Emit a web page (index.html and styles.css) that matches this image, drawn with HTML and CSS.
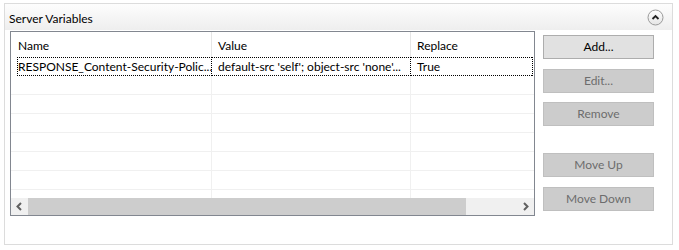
FILE: index.html
```html
<!DOCTYPE html>
<html>
<head>
<meta charset="utf-8">
<link rel="stylesheet" href="styles.css">
</head>
<body>
<div class="panel">
  <div class="panel-head">
    <span class="panel-title">Server Variables</span>
    <svg class="collapse" width="17" height="17" viewBox="0 0 17 17">
      <defs>
        <linearGradient id="cg" x1="0" y1="0" x2="0" y2="1">
          <stop offset="0" stop-color="#ffffff"/>
          <stop offset="1" stop-color="#e4e4e4"/>
        </linearGradient>
      </defs>
      <circle cx="8.5" cy="8.5" r="7.5" fill="url(#cg)" stroke="#9a9a9a" stroke-width="1"/>
      <path d="M5.5 10 L8.5 7 L11.5 10" fill="none" stroke="#222" stroke-width="1.8"/>
    </svg>
  </div>
  <div class="panel-body">
    <div class="listview">
      <div class="lv-header">
        <div class="lv-hcell">Name</div>
        <div class="lv-hcell">Value</div>
        <div class="lv-hcell">Replace</div>
      </div>
      <div class="lv-body">
        <div class="lv-row focus">
          <div class="lv-cell first">RESPONSE_Content-Security-Polic...</div>
          <div class="lv-cell">default-src 'self'; object-src 'none'...</div>
          <div class="lv-cell last">True</div>
        </div>
        <div class="lv-row"><div class="lv-cell"></div><div class="lv-cell"></div><div class="lv-cell last"></div></div>
        <div class="lv-row"><div class="lv-cell"></div><div class="lv-cell"></div><div class="lv-cell last"></div></div>
        <div class="lv-row"><div class="lv-cell"></div><div class="lv-cell"></div><div class="lv-cell last"></div></div>
        <div class="lv-row"><div class="lv-cell"></div><div class="lv-cell"></div><div class="lv-cell last"></div></div>
        <div class="lv-row"><div class="lv-cell"></div><div class="lv-cell"></div><div class="lv-cell last"></div></div>
        <div class="lv-row"><div class="lv-cell"></div><div class="lv-cell"></div><div class="lv-cell last"></div></div>
        <div class="lv-row partial"><div class="lv-cell"></div><div class="lv-cell"></div><div class="lv-cell last"></div></div>
      </div>
      <div class="hscroll">
        <div class="sb-arrow">
          <svg width="17" height="17" viewBox="0 0 17 17"><path d="M10 5 L6.5 8.5 L10 12" fill="none" stroke="#606060" stroke-width="2"/></svg>
        </div>
        <div class="sb-track"><div class="sb-thumb"></div></div>
        <div class="sb-arrow">
          <svg width="17" height="17" viewBox="0 0 17 17"><path d="M7 5 L10.5 8.5 L7 12" fill="none" stroke="#606060" stroke-width="2"/></svg>
        </div>
      </div>
    </div>
    <div class="buttons">
      <div class="btn">Add...</div>
      <div class="btn disabled gap-edit">Edit...</div>
      <div class="btn disabled gap-remove">Remove</div>
      <div class="btn disabled gap-up">Move Up</div>
      <div class="btn disabled gap-down">Move Down</div>
    </div>
  </div>
</div>
</body>
</html>
```
FILE: styles.css
```css
html, body {
  margin: 0;
  padding: 0;
  background: #ffffff;
}
body {
  font-family: "Lato", "Noto Sans", sans-serif;
  font-size: 12px;
  color: #000;
}
.panel {
  margin: 3px 0 0 4px;
  width: 669px;
  height: 242px;
  box-sizing: border-box;
  border: 1px solid #dcdcdc;
  background: #fff;
}
.panel-head {
  height: 26px;
  display: flex;
  justify-content: space-between;
  align-items: flex-start;
  background: linear-gradient(#fdfdfd, #eeeeee);
}
.panel-title {
  padding: 7px 0 0 4px;
  line-height: 16px;
}
.collapse {
  margin: 5px 8px 0 0;
  display: block;
}
.panel-body {
  display: flex;
  align-items: flex-start;
  padding: 1px 0 0 5px;
}
.listview {
  width: 525px;
  height: 185px;
  box-sizing: border-box;
  border: 1px solid #828790;
  display: flex;
  flex-direction: column;
}
.lv-header {
  height: 25px;
  display: grid;
  grid-template-columns: 201px 199px 1fr;
}
.lv-hcell {
  box-sizing: border-box;
  border-right: 1px solid #e5e5e5;
  padding: 6px 0 0 6px;
  line-height: 16px;
}
.lv-hcell:first-child {
  padding-left: 7px;
}
.lv-hcell:last-child {
  border-right: none;
}
.lv-body {
  height: 141px;
  overflow: hidden;
}
.lv-row {
  height: 19px;
  display: grid;
  grid-template-columns: 201px 199px 1fr;
}
.lv-cell {
  box-sizing: border-box;
  border-right: 1px solid #f0f0f0;
  border-bottom: 1px solid #f0f0f0;
  padding-left: 6px;
  line-height: 17px;
  white-space: nowrap;
  overflow: hidden;
}
.lv-cell.last {
  border-right: none;
}
.lv-row.partial .lv-cell {
  border-bottom: none;
}
.lv-row.focus .lv-cell {
  border: none;
  padding: 1px 0 0 6px;
  line-height: 17px;
  background:
    repeating-linear-gradient(90deg, #000 0 1px, transparent 1px 2px) left top / 100% 1px no-repeat,
    repeating-linear-gradient(90deg, #000 0 1px, transparent 1px 2px) left bottom / 100% 1px no-repeat,
    repeating-linear-gradient(180deg, #000 0 1px, transparent 1px 2px) right top / 1px 100% no-repeat;
}
.lv-row.focus .lv-cell.first {
  margin-left: 6px;
  padding-left: 1px;
  background:
    repeating-linear-gradient(90deg, #000 0 1px, transparent 1px 2px) left top / 100% 1px no-repeat,
    repeating-linear-gradient(90deg, #000 0 1px, transparent 1px 2px) left bottom / 100% 1px no-repeat,
    repeating-linear-gradient(180deg, #000 0 1px, transparent 1px 2px) right top / 1px 100% no-repeat,
    repeating-linear-gradient(180deg, #000 0 1px, transparent 1px 2px) left top / 1px 100% no-repeat;
}
.lv-row.focus .lv-cell.last {
  margin-right: 1px;
}
.hscroll {
  height: 17px;
  display: flex;
  background: #f0f0f0;
}
.sb-arrow {
  width: 17px;
  height: 17px;
}
.sb-arrow svg {
  display: block;
}
.sb-track {
  flex: 1;
  display: flex;
}
.sb-thumb {
  width: 438px;
  height: 17px;
  background: #cdcdcd;
}
.buttons {
  display: flex;
  flex-direction: column;
  margin: 4px 0 0 8px;
}
.btn {
  width: 111px;
  height: 24px;
  box-sizing: border-box;
  border: 1px solid #adadad;
  background: #e1e1e1;
  text-align: center;
  line-height: 22px;
  color: #000;
}
.btn.disabled {
  background: #cccccc;
  border-color: #bfbfbf;
  color: #6d6d6d;
}
.gap-edit { margin-top: 10px; }
.gap-remove { margin-top: 9px; }
.gap-up { margin-top: 27px; }
.gap-down { margin-top: 10px; }
```
